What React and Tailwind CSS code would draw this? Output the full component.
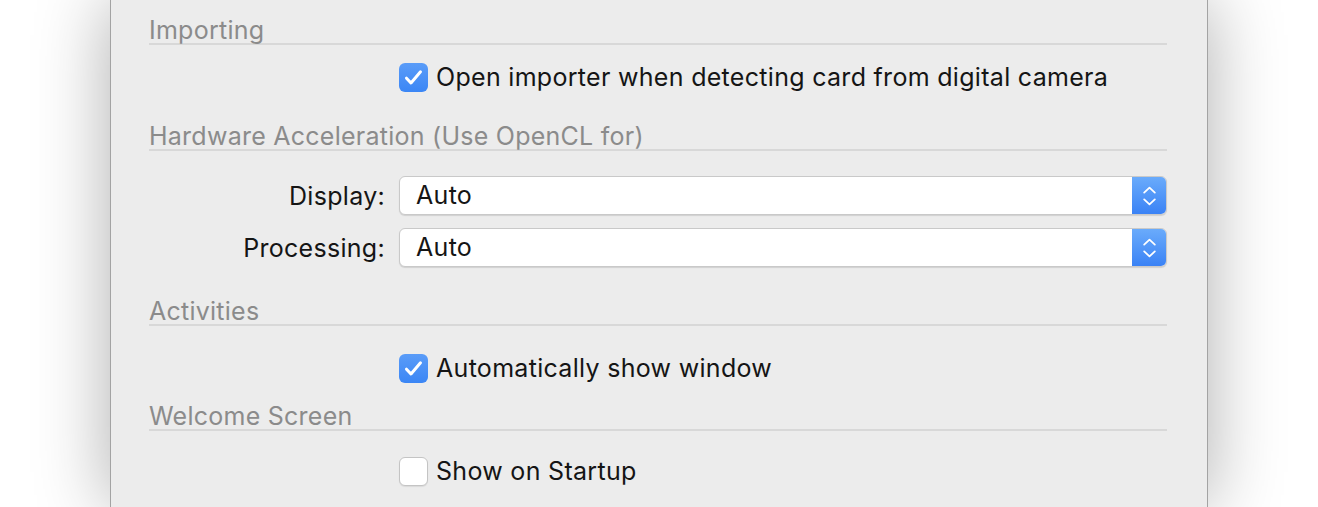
import React from 'react';

const Check = ({ checked }) =>
  checked ? (
    <span className="flex h-[29px] w-[29px] shrink-0 items-center justify-center rounded-[6px] bg-gradient-to-b from-[#5a9cf8] to-[#3b86f5]">
      <svg viewBox="0 0 29 29" className="h-[29px] w-[29px]">
        <path d="M7.5 15.2 L12 20 L21.5 8.8" fill="none" stroke="#fff" strokeWidth="3" strokeLinecap="round" strokeLinejoin="round" />
      </svg>
    </span>
  ) : (
    <span className="h-[29px] w-[29px] shrink-0 rounded-[6px] border border-[#c4c4c4] bg-white shadow-[0_1px_1px_rgba(0,0,0,0.08)]" />
  );

const Header = ({ children, className = '' }) => (
  <div className={`border-b-2 border-[#d8d8d8] pt-[5px] text-[25px] leading-[25px] tracking-[0.25px] text-[#8b8b8b] ${className}`}>{children}</div>
);

const CheckRow = ({ checked, label, className = '' }) => (
  <div className={`flex items-center pl-[250px] ${className}`}>
    <Check checked={checked} />
    <span className="ml-[8px] text-[25px] leading-[30px] tracking-[0.3px] text-[#151515]">{label}</span>
  </div>
);

const SelectRow = ({ label, value, className = '' }) => (
  <div className={`flex items-center ${className}`}>
    <span className="w-[236px] text-right text-[25px] leading-[30px] tracking-[0.3px] text-[#151515]">{label}</span>
    <div className="ml-[14px] flex h-[39px] flex-1 overflow-hidden rounded-[6px] border border-[#c9c9c9] bg-white shadow-[0_1px_1px_rgba(0,0,0,0.12)]">
      <span className="flex-1 pl-[16px] text-[25px] leading-[37px] tracking-[0.3px] text-[#151515]">{value}</span>
      <span className="flex w-[34px] flex-col items-center justify-center gap-[4px] bg-gradient-to-b from-[#6aabfb] to-[#3a82f5]">
        <svg viewBox="0 0 16 9" className="h-[8px] w-[15px]">
          <path d="M2 7.5 L8 1.8 L14 7.5" fill="none" stroke="#fff" strokeWidth="2" strokeLinecap="round" strokeLinejoin="round" />
        </svg>
        <svg viewBox="0 0 16 9" className="h-[8px] w-[15px]">
          <path d="M2 1.5 L8 7.2 L14 1.5" fill="none" stroke="#fff" strokeWidth="2" strokeLinecap="round" strokeLinejoin="round" />
        </svg>
      </span>
    </div>
  </div>
);

export default function App() {
  return (
    <div className="h-[507px] w-[1318px] overflow-hidden bg-white font-['Inter',sans-serif]">
      <div className="ml-[110px] h-full w-[1098px] border-x border-[#a3a3a3] bg-[#ececec] pl-[38px] pr-[40px] pt-[13px] shadow-[0_0_70px_rgba(0,0,0,0.32)]">
        <Header>Importing</Header>
        <CheckRow checked className="mt-[17px]" label="Open importer when detecting card from digital camera" />
        <Header className="mt-[27px]">Hardware Acceleration (Use OpenCL for)</Header>
        <SelectRow className="mt-[25px]" label="Display:" value="Auto" />
        <SelectRow className="mt-[13px]" label="Processing:" value="Auto" />
        <Header className="mt-[27px]">Activities</Header>
        <CheckRow checked className="mt-[27px]" label="Automatically show window" />
        <Header className="mt-[16px]">Welcome Screen</Header>
        <CheckRow className="mt-[25px]" label="Show on Startup" />
      </div>
    </div>
  );
}
